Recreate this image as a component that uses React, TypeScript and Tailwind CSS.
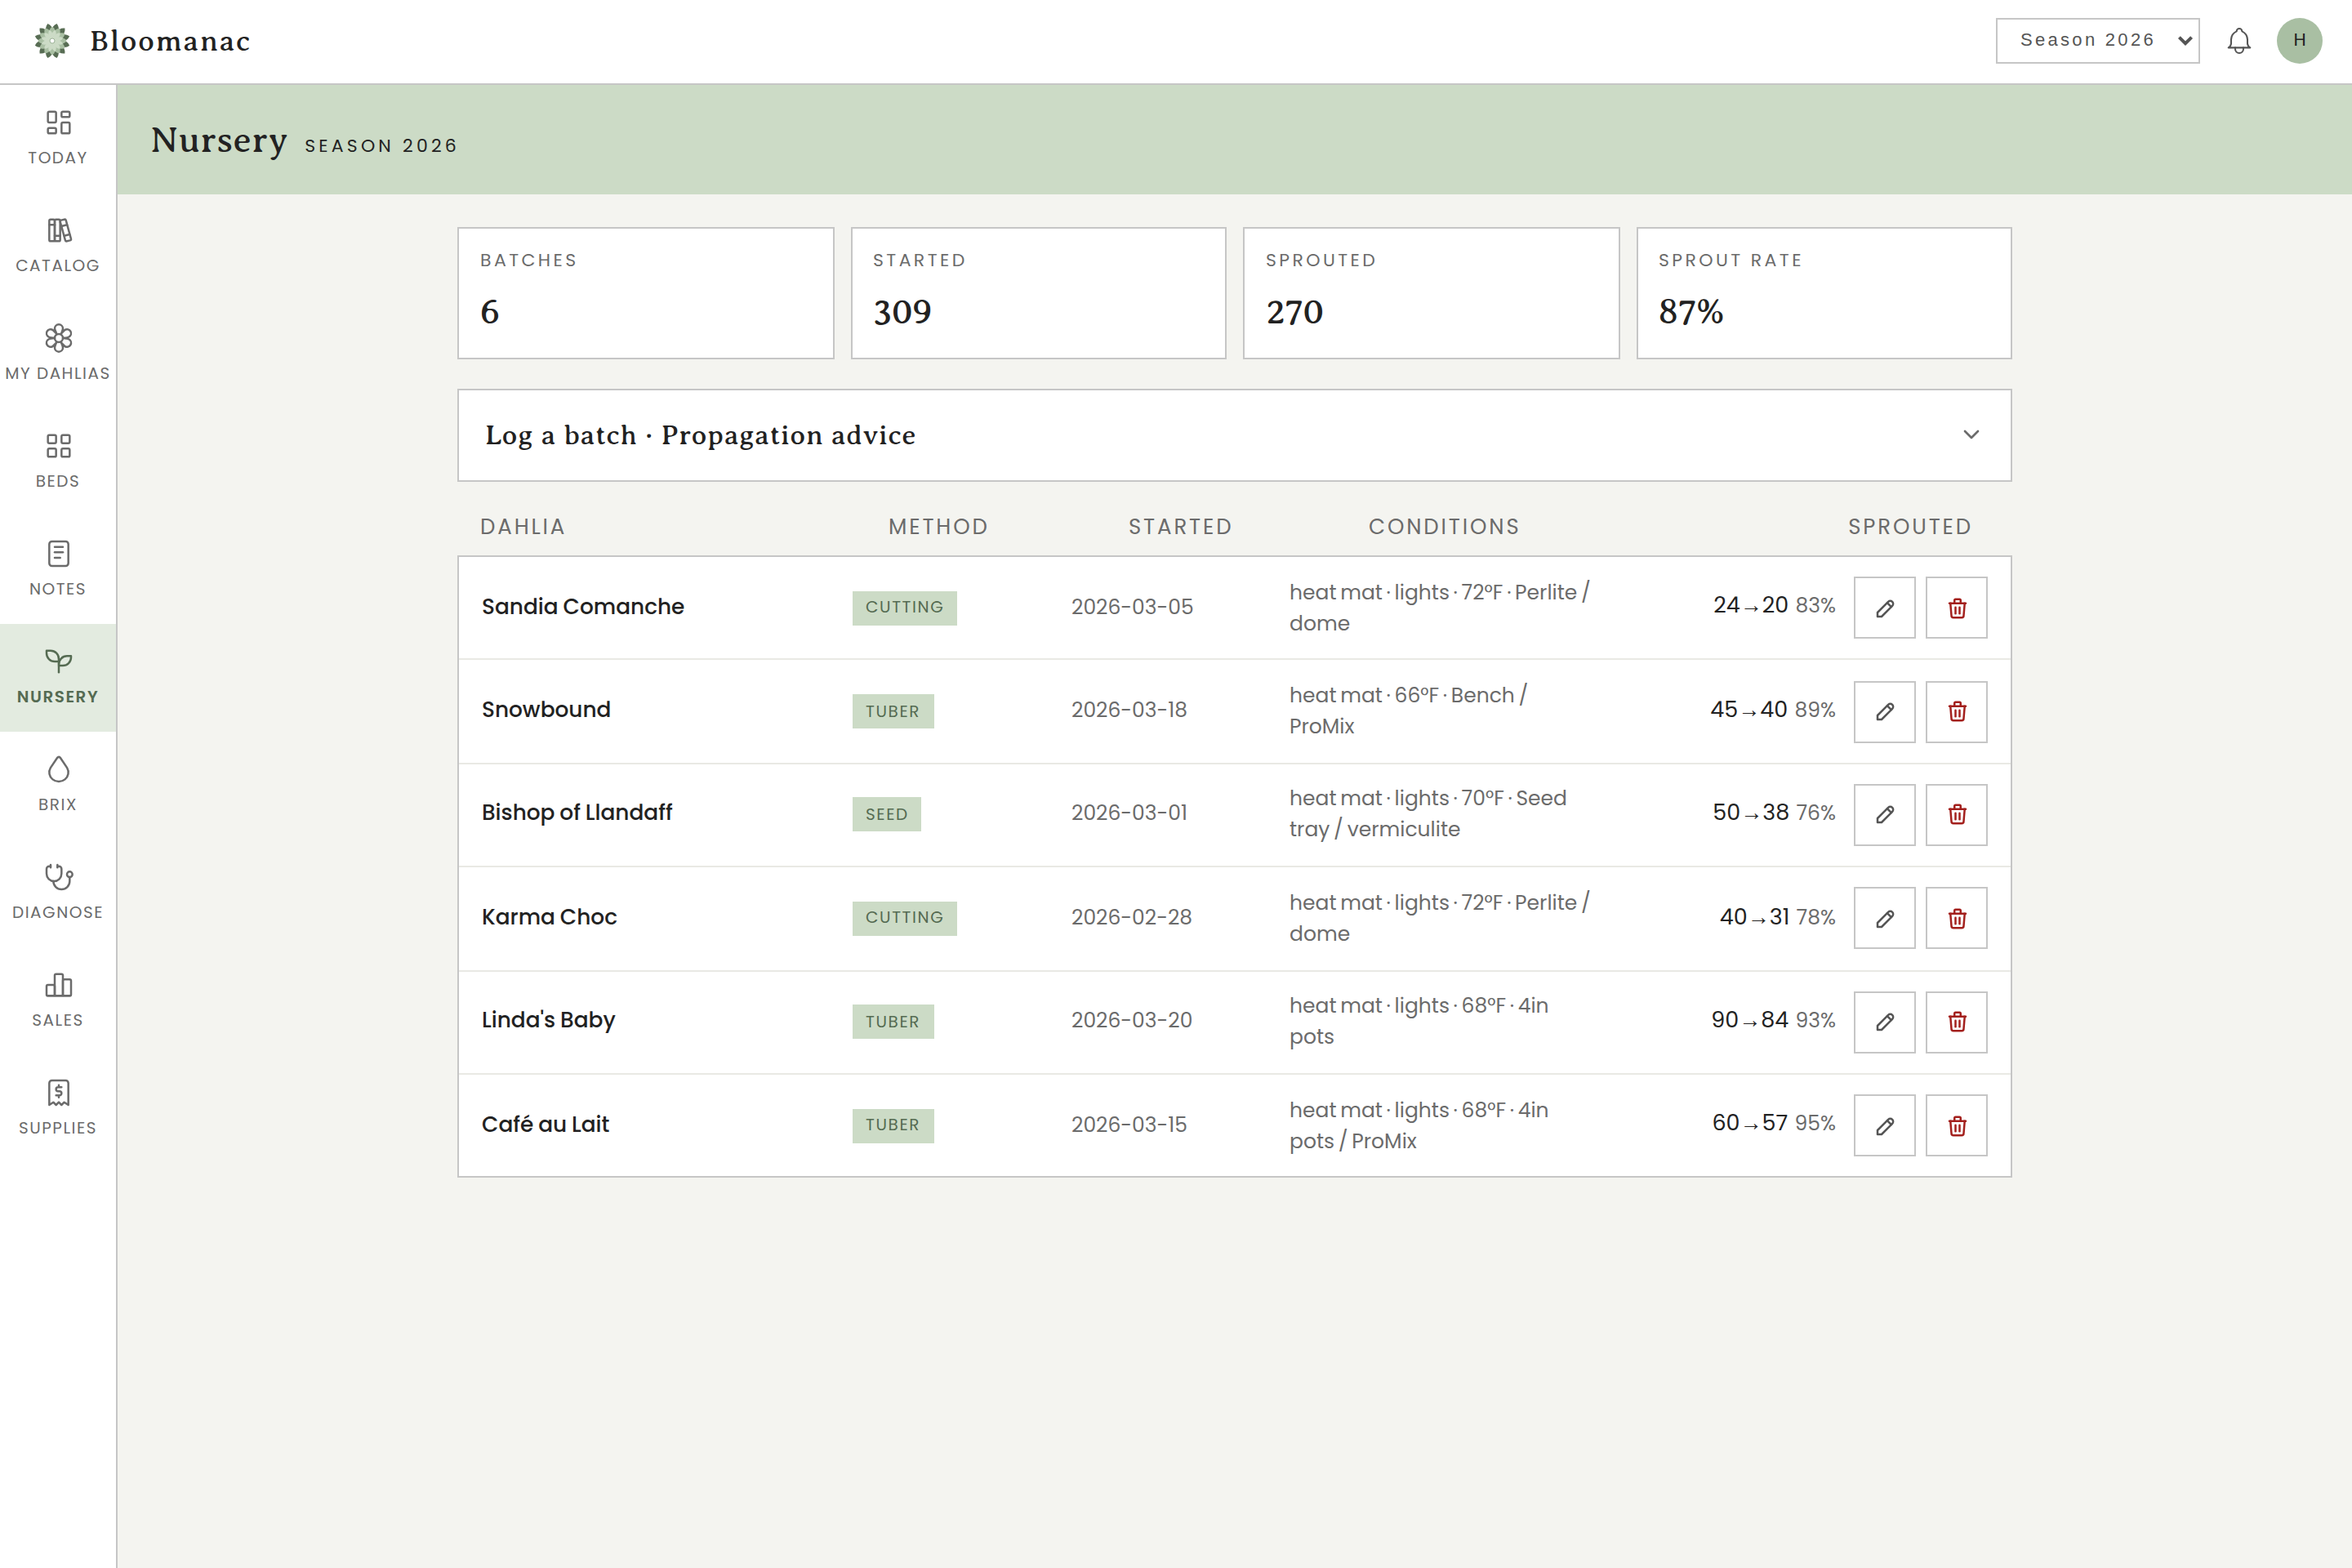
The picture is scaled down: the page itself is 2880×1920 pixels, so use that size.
import React from 'react';
import type { ComponentType, SVGProps } from 'react';
import {
  TbBell, TbBooks, TbChevronDown, TbDroplet, TbFlower, TbLayoutDashboard, TbLayoutGrid,
  TbNotes, TbPencil, TbReceipt2, TbStethoscope, TbTrash,
} from 'react-icons/tb';

type Icon = ComponentType<SVGProps<SVGSVGElement>>;

const Sprout: Icon = (props) => (
  <svg viewBox="0 0 24 24" fill="none" stroke="currentColor" strokeLinecap="round" strokeLinejoin="round" {...props}>
    <path d="M12 10a6 6 0 0 0-6-6h-3v2a6 6 0 0 0 6 6h3" />
    <path d="M12 14a6 6 0 0 1 6-6h3v1a6 6 0 0 1-6 6h-3" />
    <path d="M12 20v-10" />
  </svg>
);

const Bars: Icon = (props) => (
  <svg viewBox="0 0 24 24" fill="none" stroke="currentColor" strokeLinecap="round" strokeLinejoin="round" {...props}>
    <rect x="3" y="12" width="6" height="8" rx="1" />
    <rect x="9" y="4" width="6" height="16" rx="1" />
    <rect x="15" y="8" width="6" height="12" rx="1" />
    <path d="M4 20h16" />
  </svg>
);

const NAV: { label: string; icon: Icon }[] = [
  { label: 'Today', icon: TbLayoutDashboard as Icon },
  { label: 'Catalog', icon: TbBooks as Icon },
  { label: 'My Dahlias', icon: TbFlower as Icon },
  { label: 'Beds', icon: TbLayoutGrid as Icon },
  { label: 'Notes', icon: TbNotes as Icon },
  { label: 'Nursery', icon: Sprout },
  { label: 'Brix', icon: TbDroplet as Icon },
  { label: 'Diagnose', icon: TbStethoscope as Icon },
  { label: 'Sales', icon: Bars },
  { label: 'Supplies', icon: TbReceipt2 as Icon },
];

const STATS = [
  ['Batches', '6'],
  ['Started', '309'],
  ['Sprouted', '270'],
  ['Sprout rate', '87%'],
];

const ROWS = [
  { name: 'Sandia Comanche', method: 'Cutting', date: '2026-03-05', cond: 'heat mat · lights · 72°F · Perlite / dome', from: 24, to: 20, pct: 83 },
  { name: 'Snowbound', method: 'Tuber', date: '2026-03-18', cond: 'heat mat · 66°F · Bench / ProMix', from: 45, to: 40, pct: 89 },
  { name: 'Bishop of Llandaff', method: 'Seed', date: '2026-03-01', cond: 'heat mat · lights · 70°F · Seed tray / vermiculite', from: 50, to: 38, pct: 76 },
  { name: 'Karma Choc', method: 'Cutting', date: '2026-02-28', cond: 'heat mat · lights · 72°F · Perlite / dome', from: 40, to: 31, pct: 78 },
  { name: "Linda's Baby", method: 'Tuber', date: '2026-03-20', cond: 'heat mat · lights · 68°F · 4in pots', from: 90, to: 84, pct: 93 },
  { name: 'Café au Lait', method: 'Tuber', date: '2026-03-15', cond: 'heat mat · lights · 68°F · 4in pots / ProMix', from: 60, to: 57, pct: 95 },
];

const ANGLES = Array.from({ length: 12 }, (_, i) => i * 30);

function Logo() {
  return (
    <svg viewBox="-14 -14 28 28" className="size-7">
      {ANGLES.map((a) => (
        <path key={a} transform={`rotate(${a + 15})`} fill="#586d54" d="M0 0C-1.6-4-3.6-8.2 0-10.9C3.6-8.2 1.6-4 0 0Z" />
      ))}
      {ANGLES.map((a) => (
        <path key={a} transform={`rotate(${a})`} fill="#a9bfa3" d="M0 0C-1.6-3-3.2-6.6 0-8.8C3.2-6.6 1.6-3 0 0Z" />
      ))}
      {ANGLES.map((a) => (
        <path key={a} transform={`rotate(${a + 15})`} fill="#ccdbc6" d="M0 0C-1.2-2.4-2-5 0-6.8C2-5 1.2-2.4 0 0Z" />
      ))}
      <circle r="1.5" fill="#fff" stroke="#8aa384" strokeWidth="0.4" />
    </svg>
  );
}

export default function App() {
  return (
    <div className="h-[1920px] w-[2880px] overflow-hidden">
      <div className="flex h-[960px] w-[1440px] origin-top-left scale-200 flex-col bg-[#f4f4f0] font-[Poppins,'Liberation_Sans',sans-serif] text-[13px] leading-[1.6] text-[#222]">
        <header className="flex h-[52px] shrink-0 items-center border-b border-[#c6c6c6] bg-white px-[18px] pb-px">
          <Logo />
          <span className="ml-[9px] font-['Averia_Serif_Libre','Liberation_Serif',serif] text-[18px] tracking-[0.05em]">Bloomanac</span>
          <div className="ml-auto flex items-center">
            <div className="flex h-7 w-[125px] items-center justify-between border border-[#c6c6c6] pr-[3px] pl-3.5 font-['Liberation_Sans',sans-serif] text-[11px] tracking-[0.15em] text-[#555]">
              <span className="pb-px">Season 2026</span>
              <svg viewBox="0 0 10 8" className="h-2 w-2.5" fill="none" stroke="currentColor" strokeWidth="2">
                <path d="M1.2 1.8L5 5.6L8.8 1.8" />
              </svg>
            </div>
            <TbBell className="ml-[13.5px] size-5 stroke-[1.25] text-[#555]" />
            <div className="ml-[13.5px] flex size-7 items-center justify-center rounded-full bg-[#a9bfa3] pb-px text-[11px]">H</div>
          </div>
        </header>

        <div className="flex min-h-0 flex-1">
          <nav className="w-[72px] shrink-0 border-r border-[#c6c6c6] bg-white">
            {NAV.map(({ label, icon: NavIcon }) => (
              <a
                key={label}
                className={
                  label === 'Nursery'
                    ? 'flex h-[66px] flex-col items-center gap-1 bg-[#e3ebe0] pt-[13px] font-semibold text-[#556b52]'
                    : 'flex h-[66px] flex-col items-center gap-1 pt-[13px] text-[#6b6b6b]'
                }
              >
                <NavIcon className="ml-px size-5 shrink-0 stroke-[1.5]" />
                <span className="text-[10px] leading-[15px] tracking-[0.75px] whitespace-nowrap uppercase">{label}</span>
              </a>
            ))}
          </nav>

          <main className="flex-1">
            <div className="flex h-[67px] items-baseline gap-2.5 bg-[#ccdbc6] px-5 pt-4">
              <h1 className="font-['Averia_Serif_Libre','Liberation_Serif',serif] text-[22px] tracking-[0.018em]">Nursery</h1>
              <span className="text-[11px] tracking-[0.19em] uppercase">Season 2026</span>
            </div>

            <div className="mx-auto w-[952px] pt-5">
              <div className="grid grid-cols-4 gap-2.5">
                {STATS.map(([label, value]) => (
                  <div key={label} className="h-[81px] border border-[#c6c6c6] bg-white px-[13px] pt-3">
                    <div className="text-[11px] leading-[15px] tracking-[0.155em] text-[#6b6b6b] uppercase">{label}</div>
                    <div className="mt-1.5 font-['Averia_Serif_Libre','Liberation_Serif',serif] text-[22px] leading-[35px] tracking-[-0.01em]">{value}</div>
                  </div>
                ))}
              </div>

              <div className="mt-[18px] flex h-[57px] items-center justify-between border border-[#c6c6c6] bg-white px-4">
                <span className="font-['Averia_Serif_Libre','Liberation_Serif',serif] text-[17px] tracking-[0.024em]">Log a batch · Propagation advice</span>
                <TbChevronDown className="mb-px size-4 text-[#6b6b6b]" />
              </div>

              <div className="mt-[17.5px] flex pb-[7.5px] pl-[14px] leading-5 tracking-[0.11em] text-[#6b6b6b] uppercase">
                <span className="w-[250px]">Dahlia</span>
                <span className="w-[147px]">Method</span>
                <span className="w-[147px]">Started</span>
                <span className="flex-1">Conditions</span>
                <span className="mr-6">Sprouted</span>
              </div>

              <div className="divide-y divide-[#e9e9e4] border border-[#c6c6c6] bg-white">
                {ROWS.map((r) => (
                  <div key={r.name} className="flex h-[63.4px] items-center px-3.5 last:h-[62.4px]">
                    <div className="w-[227px] pb-[2px] text-[13.2px] font-medium [word-spacing:-0.5px]">{r.name}</div>
                    <div className="flex w-[134px]">
                      <span className="flex h-[21px] items-center bg-[#ccdbc6] px-2 text-[10px] tracking-[0.08em] text-[#556b52] uppercase">{r.method}</span>
                    </div>
                    <div className="w-[133.5px] pb-px text-[12.5px] text-[#6b6b6b]">{r.date}</div>
                    <div className="w-[185px] pb-px text-[12.5px] leading-[19px] text-[#6b6b6b] [word-spacing:-1px]">{r.cond}</div>
                    <div className="flex-1 pb-[2px] text-right text-[13.5px]">
                      {r.from}→{r.to} <span className="ml-[0.5px] text-[12.5px] text-[#6b6b6b]">{r.pct}%</span>
                    </div>
                    <div className="ml-[11px] flex gap-1.5">
                      <button className="flex size-[38px] items-center justify-center border border-[#c6c6c6] text-[#555]">
                        <TbPencil className="size-[15px]" />
                      </button>
                      <button className="flex size-[38px] items-center justify-center border border-[#c6c6c6] text-[#a3201d]">
                        <TbTrash className="size-[15px]" />
                      </button>
                    </div>
                  </div>
                ))}
              </div>
            </div>
          </main>
        </div>
      </div>
    </div>
  );
}
